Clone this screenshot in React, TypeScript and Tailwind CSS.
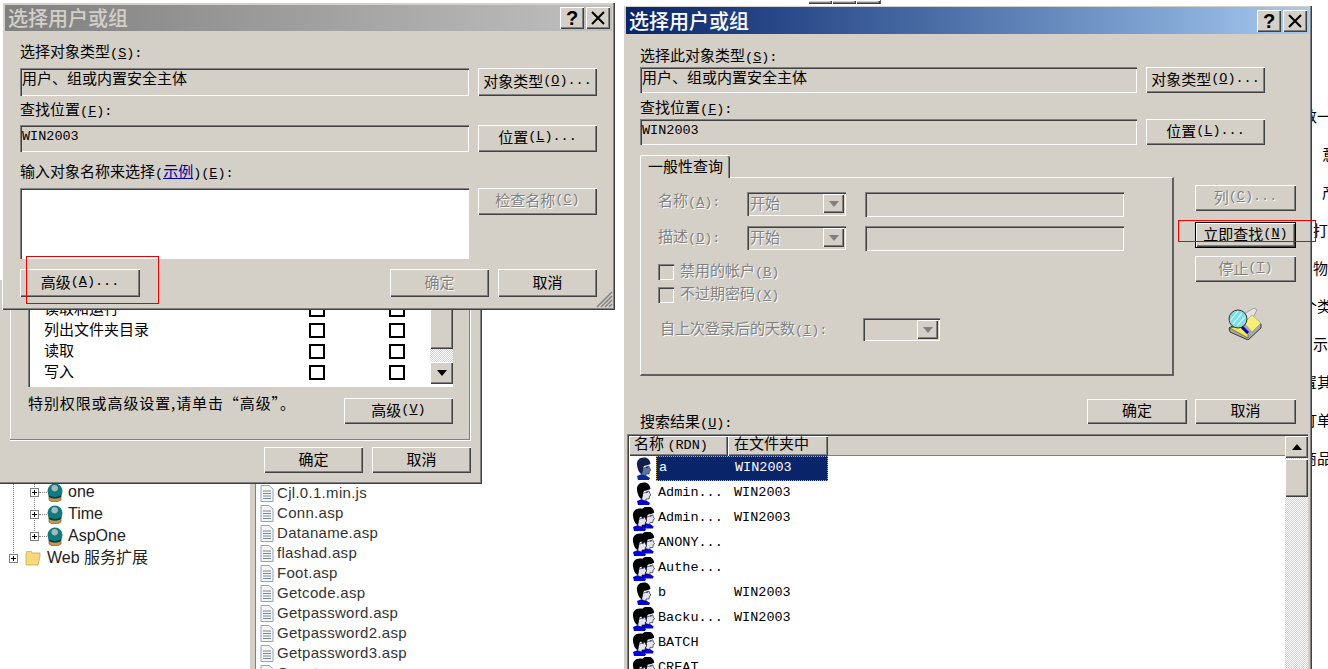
import React from 'react';

const raised = 'shadow-[inset_1px_1px_#fff,inset_-1px_-1px_#404040,inset_-2px_-2px_#808080]';
const sunken = 'shadow-[inset_1px_1px_#808080,inset_2px_2px_#404040,inset_-1px_-1px_#fff]';
const hatch = 'bg-[repeating-conic-gradient(#ffffff_0%_25%,#d4d0c8_0%_50%)] bg-[length:2px_2px]';

const Accel = ({ k, tail = '' }: { k: string; tail?: string }) => (
  <span className="font-['Liberation_Mono',monospace] text-[13.5px]">
    (<u>{k}</u>){tail}
  </span>
);

const Label = ({ children, className = '' }: { children: React.ReactNode; className?: string }) => (
  <div className={`h-4 leading-[14px] whitespace-nowrap ${className}`}>{children}</div>
);

const Btn = ({
  children,
  className = '',
  disabled = false,
  primary = false,
}: {
  children: React.ReactNode;
  className?: string;
  disabled?: boolean;
  primary?: boolean;
}) => (
  <div
    className={`flex shrink-0 items-center justify-center bg-[#d4d0c8] pb-[2px] whitespace-nowrap ${
      primary
        ? 'border border-black shadow-[inset_1px_1px_#fff,inset_-1px_-1px_#404040,inset_-2px_-2px_#808080]'
        : raised
    } ${disabled ? 'text-[#808080] [text-shadow:1px_1px_0_#fff]' : 'text-black'} ${className}`}
  >
    {children}
  </div>
);

const Field = ({ children, className = '' }: { children?: React.ReactNode; className?: string }) => (
  <div className={`shrink-0 px-[2px] leading-[18px] ${sunken} ${className}`}>{children}</div>
);

const Mono = ({ children }: { children: React.ReactNode }) => (
  <span className="font-['Liberation_Mono',monospace] text-[13.5px]">{children}</span>
);

const TitleBar = ({ active }: { active: boolean }) => (
  <div
    className={`flex shrink-0 items-center justify-between bg-gradient-to-r pl-[3px] pr-[2px] text-[20px] font-medium ${
      active
        ? 'mx-[3px] mt-[2px] h-[27px] from-[#0a246a] to-[#a6caf0] text-white'
        : 'mx-[3px] mt-[3px] h-[26px] from-[#808080] to-[#c0c0c0] text-[#d4d0c8]'
    }`}
  >
    <span>选择用户或组</span>
    <div className="flex gap-[2px]">
      <div className={`flex h-[22px] w-6 items-center justify-center bg-[#d4d0c8] text-[20px] font-bold text-black font-['Liberation_Sans',sans-serif] ${raised}`}>
        ?
      </div>
      <div className={`flex h-[22px] w-6 items-center justify-center bg-[#d4d0c8] ${raised}`}>
        <svg width="14" height="14" viewBox="0 0 14 14">
          <path d="M1 1 L13 13 M13 1 L1 13" stroke="#000" strokeWidth="2" />
        </svg>
      </div>
    </div>
  </div>
);

const Combo = ({ text, className = '' }: { text?: string; className?: string }) => (
  <div className={`flex shrink-0 items-start justify-between p-[2px] ${sunken} ${className}`}>
    <span className="pl-[1px] leading-[18px] text-[#808080] [text-shadow:1px_1px_0_#fff]">{text}</span>
    <div className={`flex h-[19px] w-[21px] items-center justify-center bg-[#d4d0c8] ${raised}`}>
      <div className="h-0 w-0 border-x-[5px] border-t-[6px] border-x-transparent border-t-[#808080]" />
    </div>
  </div>
);

const CheckRow = ({ children }: { children: React.ReactNode }) => (
  <div className="flex h-4 items-center gap-[6px] text-[#808080] [text-shadow:1px_1px_0_#fff]">
    <div className={`h-4 w-4 shrink-0 ${sunken}`} />
    <span className="-mt-[2px]">{children}</span>
  </div>
);

const Arrow = ({ up = false }: { up?: boolean }) => (
  <div className={`flex h-[22px] w-full shrink-0 items-center justify-center bg-[#d4d0c8] ${raised}`}>
    <div
      className={`h-0 w-0 border-x-[5px] border-x-transparent ${
        up ? 'border-b-[6px] border-b-black' : 'border-t-[6px] border-t-black'
      }`}
    />
  </div>
);

// one head in profile, looking right
const Head = ({ hair = '#000', face = '#e4e4ec', cloth = '#0000e0' }: { hair?: string; face?: string; cloth?: string }) => (
  <g>
    <path d="M1 19 L6 17 L11 19 L14 21 L13 23 L2 23 Z" fill={cloth} />
    <path d="M5 12 L13 9 L14 12 L15 13 L13.5 14 L13 17 L10 17 L10 19 L6 18 Z" fill={face} stroke={hair} strokeWidth="0.6" />
    <path d="M8 0.5 C3 0.5 0.5 4 1 8 C1.5 12 3 16 5.5 17 C7.5 15 6.5 12 7.5 10 C8 8 10 9 12 8 L14.5 7 C14 3 12 0.5 8 0.5 Z" fill={hair} />
    <path d="M10 10.5 L12 10" stroke={hair === '#000' ? '#3030c0' : '#10204a'} strokeWidth="1" />
  </g>
);

const Person = ({ dim = false }: { dim?: boolean }) => (
  <svg width="16" height="24" viewBox="0 0 16 24" className="shrink-0">
    {dim ? <Head hair="#10204a" face="#5f73a8" cloth="#0a2a9a" /> : <Head />}
  </svg>
);

const Group = () => (
  <svg width="23" height="24" viewBox="0 0 23 24" className="shrink-0">
    <g transform="translate(8 -1) scale(0.98)">
      <Head />
    </g>
    <g transform="translate(0 1)">
      <Head />
    </g>
  </svg>
);

const results = [
  { icon: 'dim', name: 'a', place: 'WIN2003', selected: true },
  { icon: 'user', name: 'Admin...', place: 'WIN2003' },
  { icon: 'group', name: 'Admin...', place: 'WIN2003' },
  { icon: 'group', name: 'ANONY...', place: '' },
  { icon: 'group', name: 'Authe...', place: '' },
  { icon: 'user', name: 'b', place: 'WIN2003' },
  { icon: 'group', name: 'Backu...', place: 'WIN2003' },
  { icon: 'group', name: 'BATCH', place: '' },
  { icon: 'group', name: 'CREAT', place: '' },
];

const Globe = () => (
  <svg width="16" height="19" viewBox="0 0 16 19" className="shrink-0">
    <path d="M2 13 L14 13 L14 17 L10 19 L5 19 L2 17 Z" fill="#c89848" stroke="#5a4a28" strokeWidth="0.6" />
    <circle cx="8" cy="8" r="7.5" fill="#0f7a80" />
    <path d="M5 3 C7 1 11 2 11 5 C11 8 8 9 6 8 C4 7 4 5 5 3 Z" fill="#a8b8b8" />
    <path d="M1 11 C4 15 12 15 15 11 L14 14 C11 16 5 16 2 14 Z" fill="#083c44" />
  </svg>
);

const Folder = () => (
  <svg width="16" height="15" viewBox="0 0 16 15" className="shrink-0">
    <path d="M1 3 L1 14 L13 14 L15 5 L15 2 L7 2 L6 0 L2 0 Z" fill="#f8d878" stroke="#c8a850" strokeWidth="0.8" />
  </svg>
);

const FileIcon = () => (
  <svg width="14" height="17" viewBox="0 0 14 17" className="shrink-0">
    <path d="M1 0.5 L9 0.5 L13 4 L13 16.5 L1 16.5 Z" fill="#f4f4f4" stroke="#8fa6c0" />
    <path d="M3 6 H11 M3 8.5 H11 M3 11 H11 M3 13.5 H11" stroke="#7a8aa0" />
  </svg>
);

const PlusBox = () => (
  <svg width="9" height="9" viewBox="0 0 9 9" className="shrink-0">
    <rect x="0.5" y="0.5" width="8" height="8" fill="#fff" stroke="#808080" />
    <path d="M2 4.5 H7 M4.5 2 V7" stroke="#000" />
  </svg>
);

const SearchIcon = () => (
  <svg width="34" height="32" viewBox="0 0 34 32" className="ml-[33px] mt-[26px]">
    <path d="M1 20 L2 24 L20 32 L33 20 L33 16 L22 8 Z" fill="#a8a8a8" stroke="#000" strokeWidth="0.7" />
    <path d="M14 7 L26 0 L29 2 L24 11 L18 14 Z" fill="#e4e4e4" stroke="#777" strokeWidth="0.6" />
    <path d="M16 15 L24 7 L33 15 L24 24 Z" fill="#f6ee78" stroke="#888" strokeWidth="0.5" />
    <path d="M2 20 L11 18 L20 26 L20 30 Z" fill="#f4e848" stroke="#333" strokeWidth="0.5" />
    <path d="M12 17 L20 25" stroke="#0000d8" strokeWidth="3" />
    <circle cx="10" cy="11" r="9" fill="#7edde6" stroke="#303030" strokeWidth="1" />
    <path d="M5 16 L14 5 M2 13 L10 3 M9 18 L17 9" stroke="#c8f4f4" strokeWidth="1.2" />
  </svg>
);

const edgeRows = [
  { text: '数一', pl: 'pl-[2px]' },
  { text: '意', pl: 'pl-[22px]' },
  { text: '产', pl: 'pl-[22px]' },
  { text: '打', pl: 'pl-[13px]' },
  { text: '物', pl: 'pl-[13px]' },
  { text: '个类', pl: 'pl-[2px]' },
  { text: '示', pl: 'pl-[13px]' },
  { text: '置其', pl: 'pl-[2px]' },
  { text: '订单', pl: 'pl-[2px]' },
  { text: '商品', pl: 'pl-[2px]' },
];

const files = [
  'Cjl.0.1.min.js',
  'Conn.asp',
  'Dataname.asp',
  'flashad.asp',
  'Foot.asp',
  'Getcode.asp',
  'Getpassword.asp',
  'Getpassword2.asp',
  'Getpassword3.asp',
  'Guest.asp',
];

const BackDialog = () => (
  <div className="absolute left-0 top-[280px] h-[204px] w-[482px] bg-[#d4d0c8] shadow-[inset_-1px_-1px_#404040,inset_-2px_-2px_#808080] pl-[10px]">
    <div className="h-[161px] w-[461px] shadow-[inset_-1px_-1px_#fff,inset_-2px_-2px_#808080,inset_1px_0_#fff] pl-[18px] pt-[19px]">
      <div className={`flex h-[88px] w-[425px] bg-white pl-[2px] ${sunken}`}>
        <div className="flex flex-1 flex-col">
          {['读取和运行', '列出文件夹目录', '读取', '写入'].map((name) => (
            <div key={name} className="flex h-[21px] items-center pl-[14px]">
              <span className="-mt-[2px] w-[265px]">{name}</span>
              <div className="h-[15px] w-4 border-2 border-black" />
              <div className="ml-16 h-[15px] w-4 border-2 border-black" />
            </div>
          ))}
        </div>
        <div className="flex w-[23px] shrink-0 flex-col">
          <div className={`h-[50px] bg-[#d4d0c8] ${raised}`} />
          <div className={`h-[13px] ${hatch}`} />
          <Arrow />
        </div>
      </div>
      <div className="mt-[11px] flex w-[425px] items-start justify-between">
        <span className="-mt-[6px] tracking-[0.9px]">特别权限或高级设置,请单击“高级”。</span>
        <Btn className="h-[26px] w-[109px]">
          高级
          <Accel k="V" />
        </Btn>
      </div>
    </div>
    <div className="mt-[6px] flex w-[461px] justify-end gap-[9px]">
      <Btn className="h-[26px] w-[99px]">确定</Btn>
      <Btn className="h-[26px] w-[99px]">取消</Btn>
    </div>
  </div>
);

const FrontDialog = () => (
  <div className={`absolute left-[2px] top-[2px] flex h-[308px] w-[613px] flex-col bg-[#d4d0c8] ${raised}`}>
    <TitleBar active={false} />
    <div className="flex flex-col px-[18px]">
      <Label className="mt-[13px]">
        选择对象类型
        <Accel k="S" tail=":" />
      </Label>
      <div className="mt-2 flex gap-2">
        <Field className="h-7 w-[449px] pt-px">用户、组或内置安全主体</Field>
        <Btn className="ml-px h-7 w-[119px]">
          对象类型
          <Accel k="O" tail="..." />
        </Btn>
      </div>
      <Label className="mt-[6px]">
        查找位置
        <Accel k="F" tail=":" />
      </Label>
      <div className="mt-[7px] flex gap-2">
        <Field className="h-[27px] w-[449px]">
          <Mono>WIN2003</Mono>
        </Field>
        <Btn className="ml-px h-[27px] w-[119px]">
          位置
          <Accel k="L" tail="..." />
        </Btn>
      </div>
      <Label className="mt-3">
        输入对象名称来选择
        <Mono>(</Mono>
        <u className="text-[#0000a0]">示例</u>
        <Mono>)</Mono>
        <Accel k="E" tail=":" />
      </Label>
      <div className="mt-2 flex gap-2">
        <Field className="h-[71px] w-[449px] bg-white" />
        <Btn disabled className="ml-px h-[27px] w-[119px]">
          检查名称
          <Accel k="C" />
        </Btn>
      </div>
      <div className="mt-[10px] flex items-start gap-[9px]">
        <Btn className="mr-auto h-7 w-[120px]">
          高级
          <Accel k="A" tail="..." />
        </Btn>
        <Btn disabled className="h-7 w-[99px]">
          确定
        </Btn>
        <Btn className="h-7 w-[99px]">取消</Btn>
      </div>
    </div>
    <svg width="18" height="18" viewBox="0 0 18 18" className="absolute bottom-[2px] right-[2px]">
      <path d="M17 2 L2 17 M17 6 L6 17 M17 10 L10 17 M17 14 L14 17" stroke="#808080" strokeWidth="1.5" />
    </svg>
  </div>
);

const RightDialog = () => (
  <div className={`absolute left-[623px] top-[5px] flex h-[700px] w-[689px] flex-col bg-[#d4d0c8] ${raised}`}>
    <TitleBar active />
    <div className="flex flex-col pl-[17px]">
      <Label className="mt-[14px]">
        选择此对象类型
        <Accel k="S" tail=":" />
      </Label>
      <div className="mt-[3px] flex gap-[9px]">
        <Field className="h-[26px] w-[497px] pt-px">用户、组或内置安全主体</Field>
        <Btn className="h-[26px] w-[119px]">
          对象类型
          <Accel k="O" tail="..." />
        </Btn>
      </div>
      <Label className="mt-[7px]">
        查找位置
        <Accel k="F" tail=":" />
      </Label>
      <div className="mt-[3px] flex gap-[9px]">
        <Field className="h-[26px] w-[497px]">
          <Mono>WIN2003</Mono>
        </Field>
        <Btn className="h-[26px] w-[119px]">
          位置
          <Accel k="L" tail="..." />
        </Btn>
      </div>
      <div className="mt-[10px] flex">
        <div className="w-[534px] shrink-0">
          <div className="relative z-10 -mb-px flex h-[23px] w-[90px] items-center justify-center rounded-t-[2px] border-l border-t border-l-white border-t-white bg-[#d4d0c8] pb-[2px] shadow-[inset_-1px_0_#404040,inset_-2px_0_#808080]">
            一般性查询
          </div>
          <div className="h-[199px] border border-b-2 border-r-2 border-white border-b-[#606060] border-r-[#606060] pl-[17px] pt-[14px] text-[#808080] [text-shadow:1px_1px_0_#fff]">
            <div className="flex h-[25px] items-start">
              <span className="-mt-[3px] w-[89px] shrink-0">
                名称
                <Accel k="A" tail=":" />
              </span>
              <Combo text="开始" className="h-[24px] w-[99px]" />
              <Field className="ml-[19px] h-[25px] w-[259px]" />
            </div>
            <div className="mt-[9px] flex h-[25px] items-start">
              <span className="-mt-[1px] w-[89px] shrink-0">
                描述
                <Accel k="D" tail=":" />
              </span>
              <Combo text="开始" className="h-[24px] w-[99px]" />
              <Field className="ml-[19px] h-[25px] w-[259px]" />
            </div>
            <div className="mt-[13px]">
              <CheckRow>
                禁用的帐户
                <Accel k="B" />
              </CheckRow>
            </div>
            <div className="mt-[7px]">
              <CheckRow>
                不过期密码
                <Accel k="X" />
              </CheckRow>
            </div>
            <div className="mt-[15px] flex h-[23px] items-center pl-[2px]">
              <span className="w-[203px] shrink-0">
                自上次登录后的天数
                <Accel k="I" tail=":" />
              </span>
              <Combo className="h-[23px] w-[77px]" />
            </div>
          </div>
        </div>
        <div className="ml-[21px] flex w-[101px] flex-col pt-[30px]">
          <Btn disabled className="h-[26px] w-[101px]">
            列
            <Accel k="C" tail="..." />
          </Btn>
          <Btn primary className="mt-[11px] h-[26px] w-[101px]">
            立即查找
            <Accel k="N" />
          </Btn>
          <Btn disabled className="mt-2 h-[26px] w-[101px]">
            停止
            <Accel k="T" />
          </Btn>
          <SearchIcon />
        </div>
      </div>
      <div className="mt-[23px] flex w-[656px] items-start">
        <Label className="mt-[15px]">
          搜索结果
          <Accel k="U" tail=":" />
        </Label>
        <Btn className="ml-auto h-[25px] w-[100px]">确定</Btn>
        <Btn className="ml-2 h-[25px] w-[101px]">取消</Btn>
      </div>
      <div className={`-ml-[13px] mt-1 flex h-[300px] w-[681px] bg-white pl-[2px] pt-[2px] ${sunken}`}>
        <div className="flex-1">
          <div className="flex h-[20px] bg-[#d4d0c8] shadow-[inset_0_-1px_#808080]">
            <div className={`w-[99px] pl-[5px] leading-[14px] ${raised}`}>
              名称&nbsp;<Mono>(RDN)</Mono>
            </div>
            <div className={`w-[100px] pl-[6px] leading-[14px] ${raised}`}>在文件夹中</div>
          </div>
          {results.map((r, i) => (
            <div key={i} className="flex h-[25px] items-center pl-[2px]">
              <div className="flex w-[25px] shrink-0 justify-center">
                {r.icon === 'group' ? <Group /> : <Person dim={r.icon === 'dim'} />}
              </div>
              <div
                className={`flex h-[25px] w-[172px] items-center pl-[2px] font-['Liberation_Mono',monospace] text-[13.5px] ${
                  r.selected ? 'border border-dotted border-[#c8b060] bg-[#0a246a] text-white' : 'text-black'
                }`}
              >
                <span className="w-[76px] shrink-0">{r.name}</span>
                <span>{r.place}</span>
              </div>
            </div>
          ))}
        </div>
        <div className={`flex h-full w-[23px] shrink-0 flex-col ${hatch}`}>
          <Arrow up />
          <div className={`mt-px h-[38px] bg-[#d4d0c8] ${raised}`} />
        </div>
      </div>
    </div>
  </div>
);

export default function App() {
  return (
    <div className="relative h-[669px] w-[1328px] overflow-hidden bg-white font-['Noto_Sans_CJK_SC',sans-serif] text-[15px] text-black">
      {/* stuff behind the dialogs */}
      <div className="absolute left-[808px] top-0 flex h-[4px] border-r border-[#606060]">
        <div className={`w-6 bg-[#d4d0c8] ${raised}`} />
        <div className={`w-6 bg-[#d4d0c8] ${raised}`} />
        <div className={`w-6 bg-[#d4d0c8] ${raised}`} />
      </div>

      <div className="absolute left-[1300px] top-[97px] flex w-7 flex-col overflow-hidden">
        {edgeRows.map((row) => (
          <div key={row.text} className={`h-[38px] whitespace-nowrap leading-[38px] ${row.pl}`}>
            {row.text}
          </div>
        ))}
      </div>

      <div className="absolute left-0 top-[481px] w-[250px] font-['Liberation_Sans','Noto_Sans_CJK_SC',sans-serif] text-[16px] text-[#222]">
        <div className="absolute bottom-[12px] left-[13px] top-0 border-l border-dotted border-[#808080]" />
        <div className="absolute bottom-[34px] left-[34px] top-0 border-l border-dotted border-[#808080]" />
        {['one', 'Time', 'AspOne'].map((name) => (
          <div key={name} className="relative flex h-[22px] items-center pl-[30px]">
            <PlusBox />
            <div className="w-2 border-t border-dotted border-[#808080]" />
            <Globe />
            <span className="ml-[5px]">{name}</span>
          </div>
        ))}
        <div className="relative flex h-[22px] items-center pl-[9px]">
          <PlusBox />
          <div className="ml-[7px]">
            <Folder />
          </div>
          <span className="ml-[6px]">Web 服务扩展</span>
        </div>
      </div>

      <div className="absolute left-[250px] top-[483px] h-[186px] w-[6px] border-r border-[#808080] bg-[#d4d0c8]" />

      <div className="absolute left-[260px] top-[483px] font-['Liberation_Sans',sans-serif] text-[15px] tracking-[0.3px] text-[#333]">
        {files.map((name) => (
          <div key={name} className="flex h-5 items-center gap-[3px]">
            <FileIcon />
            <span>{name}</span>
          </div>
        ))}
      </div>

      <BackDialog />
      <FrontDialog />
      <RightDialog />

      {/* red marks drawn on the screenshot */}
      <div className="absolute left-[26px] top-[256px] z-20 h-[48px] w-[133px] border border-[#ee0000]" />
      <div className="absolute left-[1178px] top-[220px] z-20 h-[22px] w-[138px] border border-[#ee0000]" />
    </div>
  );
}
